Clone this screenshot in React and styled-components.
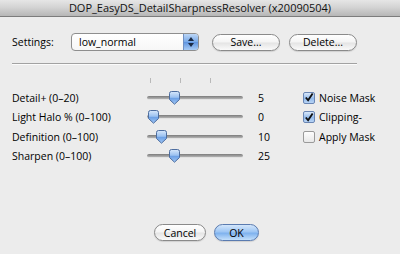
import React from "react";
import styled, { createGlobalStyle } from "styled-components";

const GlobalStyle = createGlobalStyle`
  html, body {
    margin: 0;
    padding: 0;
    background: #ececec;
  }
  body {
    font-family: "Open Sans", "DejaVu Sans", sans-serif;
    font-size: 10.5px;
    color: #000;
  }
`;

const Window = styled.div`
  width: 400px;
  height: 254px;
  display: flex;
  flex-direction: column;
  overflow: hidden;
  background: #ececec;
`;

const TitleBar = styled.div`
  height: 16px;
  line-height: 16px;
  text-align: center;
  font-size: 11px;
  color: #111;
  background: linear-gradient(#e6e6e6, #d4d4d4 45%, #b6b6b6);
  border-bottom: 1px solid #7c7c7c;
`;

const Body = styled.div`
  flex: 1;
  display: flex;
  flex-direction: column;
  padding: 0 12px 13px;
`;

const SettingsRow = styled.div`
  margin-top: 16px;
  height: 18px;
  display: flex;
  align-items: center;
`;

const SettingsLabel = styled.span`
  width: 59px;
`;

const Popup = styled.div`
  width: 128px;
  height: 18px;
  box-sizing: border-box;
  display: flex;
  border: 1px solid #8e8e8e;
  border-radius: 4px;
  background: linear-gradient(#ffffff, #f7f7f7);
  overflow: hidden;
`;

const PopupText = styled.span`
  flex: 1;
  padding-left: 7px;
  line-height: 16px;
`;

const PopupArrows = styled.div`
  width: 14px;
  display: flex;
  flex-direction: column;
  align-items: center;
  justify-content: center;
  gap: 2px;
  border-left: 1px solid #6f8fc2;
  background: linear-gradient(#bcd6f6, #78a9e8 50%, #5e94e0 51%, #a9ccf5);
`;

const ButtonGroup = styled.div`
  display: flex;
  gap: 9px;
  margin-left: 13px;
`;

const PushButton = styled.div`
  width: ${(p) => p.$width}px;
  height: 17px;
  box-sizing: border-box;
  display: flex;
  align-items: center;
  justify-content: center;
  border: 1px solid ${(p) => (p.$primary ? "#5a7bb0" : "#8a8a8a")};
  border-radius: 9px;
  background: ${(p) =>
    p.$primary
      ? "linear-gradient(#d3e6fb, #9ec6f4 45%, #7fb2ee 55%, #c4e0fb)"
      : "linear-gradient(#ffffff, #f4f4f4 48%, #e4e4e4 52%, #fafafa)"};
  box-shadow: 0 1px 1px rgba(0, 0, 0, 0.12);
`;

const Separator = styled.div`
  margin-top: 12px;
  width: 345px;
  border-top: 1px solid #a2a2a2;
  border-bottom: 1px solid #fbfbfb;
`;

const Ticks = styled.div`
  margin: 13px 0 0 138px;
  height: 5px;
  display: flex;
  gap: 29px;
`;

const Tick = styled.span`
  width: 1px;
  height: 5px;
  background: #b9b9b9;
`;

const ControlGrid = styled.div`
  margin-top: 5px;
  display: grid;
  grid-template-columns: 135px 96px 60px 1fr;
  grid-auto-rows: 19.5px;
  align-items: center;
`;

const ValueText = styled.span`
  padding-left: 15px;
`;

const SliderBox = styled.div`
  position: relative;
  height: 14px;
  display: flex;
  align-items: center;
`;

const Track = styled.div`
  width: 100%;
  height: 3px;
  border-radius: 2px;
  background: linear-gradient(#7b7b7b, #b4b4b4);
  border-bottom: 1px solid #e2e2e2;
`;

const Thumb = styled.svg`
  position: absolute;
  top: 0;
  margin-left: -6.5px;
`;

const CheckLabel = styled.label`
  display: flex;
  align-items: center;
  gap: 4px;
`;

const Box = styled.span`
  width: 12px;
  height: 12px;
  box-sizing: border-box;
  display: flex;
  align-items: center;
  justify-content: center;
  border: 1px solid ${(p) => (p.$checked ? "#6a86b4" : "#9a9a9a")};
  border-radius: 2px;
  background: ${(p) =>
    p.$checked
      ? "linear-gradient(#d9e8fa, #93bbec 55%, #b8d4f5)"
      : "linear-gradient(#fdfdfd, #e8e8e8)"};
`;

const Footer = styled.div`
  margin-top: auto;
  display: flex;
  gap: 8px;
  padding-left: 142px;
`;

const SliderThumb = ({ pos }) => (
  <Thumb width="13" height="14" viewBox="0 0 13 14" style={{ left: pos }}>
    <defs>
      <linearGradient id="thumbFill" x1="0" y1="0" x2="0" y2="1">
        <stop offset="0" stopColor="#d8e8fb" />
        <stop offset="0.45" stopColor="#9cc2f1" />
        <stop offset="0.55" stopColor="#6fa2e6" />
        <stop offset="1" stopColor="#9fc6f4" />
      </linearGradient>
    </defs>
    <path
      d="M1.5 2.5 Q1.5 0.5 3.5 0.5 H9.5 Q11.5 0.5 11.5 2.5 V8.5 L6.5 13.2 L1.5 8.5 Z"
      fill="url(#thumbFill)"
      stroke="#4d6d9f"
      strokeWidth="1"
    />
  </Thumb>
);

const Slider = ({ value, max }) => {
  const pos = 6 + (value / max) * 84;
  return (
    <SliderBox>
      <Track />
      <SliderThumb pos={pos} />
    </SliderBox>
  );
};

const Checkbox = ({ checked, label }) => (
  <CheckLabel>
    <Box $checked={checked}>
      {checked && (
        <svg width="11" height="11" viewBox="0 0 11 11">
          <path d="M2 5.5 L4.5 8.5 L9.5 1" fill="none" stroke="#111" strokeWidth="2" />
        </svg>
      )}
    </Box>
    {label}
  </CheckLabel>
);

const rows = [
  { label: "Detail+ (0–20)", value: 5, max: 20, check: { label: "Noise Mask", checked: true } },
  { label: "Light Halo % (0–100)", value: 0, max: 100, check: { label: "Clipping-", checked: true } },
  { label: "Definition (0–100)", value: 10, max: 100, check: { label: "Apply Mask", checked: false } },
  { label: "Sharpen (0–100)", value: 25, max: 100 },
];

const App = () => {
  return (
    <Window>
      <GlobalStyle />
      <TitleBar>DOP_EasyDS_DetailSharpnessResolver (x20090504)</TitleBar>
      <Body>
        <SettingsRow>
          <SettingsLabel>Settings:</SettingsLabel>
          <Popup>
            <PopupText>low_normal</PopupText>
            <PopupArrows>
              <svg width="6" height="4" viewBox="0 0 6 4">
                <path d="M0 4 L3 0 L6 4 Z" fill="#1a2a44" />
              </svg>
              <svg width="6" height="4" viewBox="0 0 6 4">
                <path d="M0 0 L3 4 L6 0 Z" fill="#1a2a44" />
              </svg>
            </PopupArrows>
          </Popup>
          <ButtonGroup>
            <PushButton $width={68}>Save...</PushButton>
            <PushButton $width={68}>Delete...</PushButton>
          </ButtonGroup>
        </SettingsRow>

        <Separator />

        <Ticks>
          <Tick />
          <Tick />
          <Tick />
        </Ticks>

        <ControlGrid>
          {rows.map((row) => (
            <React.Fragment key={row.label}>
              <span>{row.label}</span>
              <Slider value={row.value} max={row.max} />
              <ValueText>{row.value}</ValueText>
              {row.check ? <Checkbox checked={row.check.checked} label={row.check.label} /> : <span />}
            </React.Fragment>
          ))}
        </ControlGrid>

        <Footer>
          <PushButton $width={52}>Cancel</PushButton>
          <PushButton $width={45} $primary>
            OK
          </PushButton>
        </Footer>
      </Body>
    </Window>
  );
};

export default App;
